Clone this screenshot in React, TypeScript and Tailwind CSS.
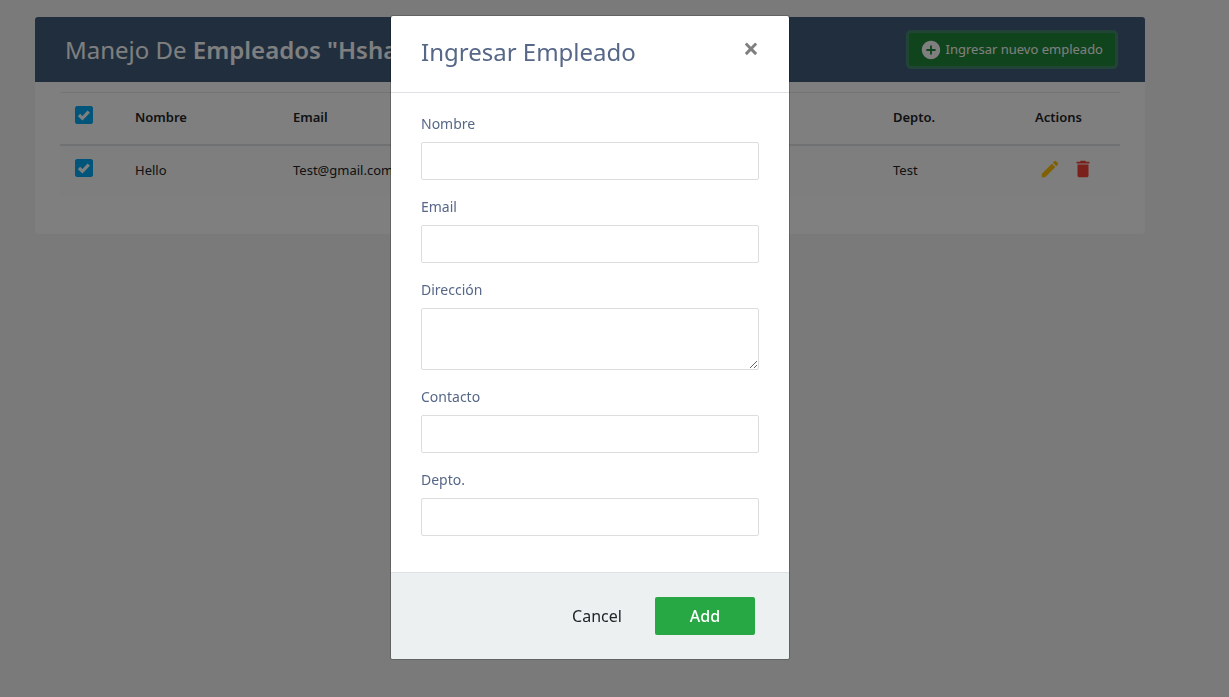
import React from "react";
import { MdAddCircle, MdDelete, MdEdit } from "react-icons/md";

function Tick({ label }: { label: string }) {
  return (
    <span className="relative block size-[18px]">
      <input
        type="checkbox"
        defaultChecked
        aria-label={label}
        className="block size-[18px] appearance-none rounded-xs border border-[#bbbbbb] bg-white checked:border-[#03a9f4] checked:bg-[#03a9f4]"
      />
      <svg viewBox="0 0 18 18" className="pointer-events-none absolute inset-0 size-[18px]" fill="none" stroke="#fff" strokeWidth="3.2">
        <path d="M4 9 7.4 12.3 13.8 5.6" />
      </svg>
    </span>
  );
}

function Field({ id, label, multiline = false }: { id: string; label: string; multiline?: boolean }) {
  const box = "block w-full rounded-xs border border-[#dddddd] bg-white px-3 py-1.5 text-base text-[#495057] outline-none";
  return (
    <div className="mb-4">
      <label htmlFor={id} className="mb-2 block text-[14px] leading-[21px]">
        {label}
      </label>
      {multiline ? (
        <textarea id={id} className={`${box} h-[62px] resize-y`} />
      ) : (
        <input id={id} type="text" className={`${box} h-[38px]`} />
      )}
    </div>
  );
}

function EmployeePanel() {
  return (
    <section className="overflow-hidden rounded-[3px] bg-white">
      <header className="flex items-center justify-between bg-[#435d7d] px-[30px] py-4 text-white">
        <h2 className="text-[24px] leading-[33px]">
          Manejo De <b className="font-semibold">Empleados "Hsha</b>
        </h2>
        <button
          type="button"
          className="flex items-center gap-1 rounded-xs bg-[#218838] pr-3 pl-[11px] text-[13px] leading-[33px] whitespace-nowrap ring-3 ring-[#48b461]/50"
        >
          <MdAddCircle size={22} />
          Ingresar nuevo empleado
        </button>
      </header>
      <div className="px-[25px] pt-2.5 pb-[37px]">
        <table className="w-full table-fixed border-separate border-spacing-0 text-left text-[13px] leading-5 text-[#212529]">
          <colgroup>
            <col className="w-[60px]" />
            <col className="w-[158px]" />
            <col />
            <col className="w-[142px]" />
            <col className="w-[100px]" />
          </colgroup>
          <thead>
            <tr className="h-[54px] *:border-t *:border-b-2 *:border-t-[#e9e9e9] *:border-b-[#dee2e6] *:px-[15px]">
              <th className="pb-2">
                <Tick label="Seleccionar todos" />
              </th>
              <th className="pb-1 font-semibold">Nombre</th>
              <th className="pb-1 font-semibold">Email</th>
              <th className="pb-1 font-semibold">Depto.</th>
              <th className="pb-1 font-semibold">Actions</th>
            </tr>
          </thead>
          <tbody>
            <tr className="h-[51px] bg-[#fcfcfc] *:px-[15px]">
              <td className="pb-2">
                <Tick label="Seleccionar Hello" />
              </td>
              <td className="pb-1">Hello</td>
              <td className="pb-1">Test@gmail.com</td>
              <td className="pb-1">Test</td>
              <td className="pb-1.5">
                <div className="flex gap-[11px] pl-1">
                  <a href="#edit" aria-label="Editar" className="text-[#ffc107]">
                    <MdEdit size={22} />
                  </a>
                  <a href="#delete" aria-label="Eliminar" className="text-[#f44336]">
                    <MdDelete size={22} />
                  </a>
                </div>
              </td>
            </tr>
          </tbody>
        </table>
      </div>
    </section>
  );
}

function AddEmployeeDialog() {
  return (
    <form
      role="dialog"
      aria-labelledby="dialog-title"
      className="w-[400px] overflow-hidden rounded-[3px] border border-black/20 bg-white bg-clip-padding"
    >
      <header className="flex items-start justify-between border-b border-[#dee2e6] px-[30px] pt-5 pb-6">
        <h4 id="dialog-title" className="text-[24px] leading-8">
          Ingresar Empleado
        </h4>
        <button type="button" aria-label="Cerrar" className="text-[28px] leading-6 font-bold text-black/50">
          ×
        </button>
      </header>
      <div className="px-[30px] pt-5 pb-5">
        <Field id="nombre" label="Nombre" />
        <Field id="email" label="Email" />
        <Field id="direccion" label="Dirección" multiline />
        <Field id="contacto" label="Contacto" />
        <Field id="depto" label="Depto." />
      </div>
      <footer className="flex justify-end gap-2 border-t border-[#dee2e6] bg-[#ecf0f1] px-[34px] py-6">
        <button type="button" className="h-[38px] w-[100px] rounded-xs text-base text-[#212529]">
          Cancel
        </button>
        <button type="submit" className="h-[38px] w-[100px] rounded-xs bg-[#28a745] text-base font-medium text-white">
          Add
        </button>
      </footer>
    </form>
  );
}

export default function App() {
  return (
    <div className="min-h-screen bg-[#f5f5f5] font-['Noto_Sans',sans-serif] text-[#566787]">
      <main className="pt-[17px] pr-[84px] pl-[35px]">
        <EmployeePanel />
      </main>
      <div className="fixed inset-0 flex items-start justify-center bg-black/50 pt-[15px] pr-[49px]">
        <AddEmployeeDialog />
      </div>
    </div>
  );
}
